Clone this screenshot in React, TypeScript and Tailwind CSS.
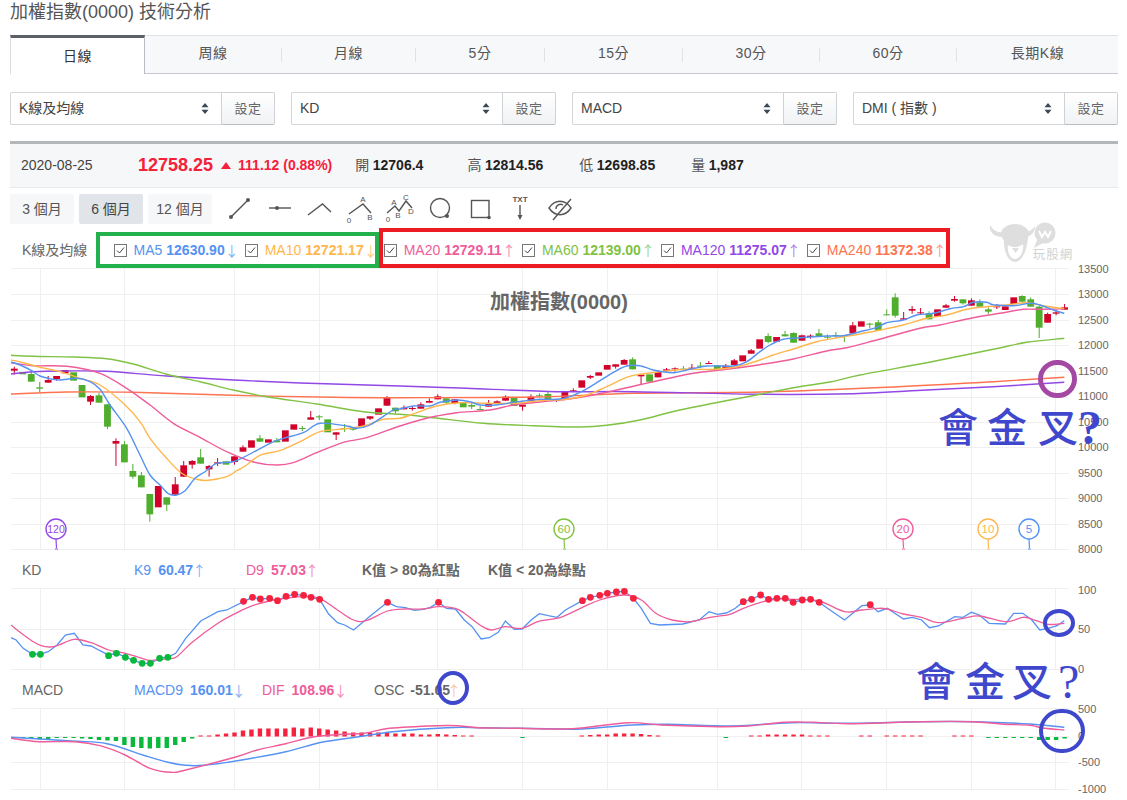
import React from 'react';

type Pt = number[];
type Candle = [string, number, number, number?, number?];

const GRID_X = [40, 124, 234, 319, 437, 522, 607, 717, 801, 886, 971, 1055];
const candleX = (i: number) => 14.3 + 8.47 * i;

// [colour, body top, body bottom, wick top, wick bottom] read from the chart
const candlesA: Candle[] = [
  ['r', 86, 92, 80, 104], ['g', 96, 103], ['g', 102, 125, 96, 125], ['g', 142, 146, 126, 158], ['r', 120, 128, 108, 128],
  ['r', 108, 117, 108, 122], ['r', 90, 100], ['g', 97, 122], ['g', 135, 172], ['r', 168, 185, 165, 195],
  ['g', 166, 188, 158, 188], ['g', 193, 260, 193, 267], ['r', 303, 311, 295, 378], ['g', 313, 367, 303, 367], ['g', 393, 410, 372, 416],
  ['g', 406, 442, 396, 442], ['g', 462, 523, 462, 545], ['r', 438, 502], ['g', 472, 494, 472, 513], ['r', 433, 464, 411, 464],
  ['r', 376, 410, 363, 410], ['r', 363, 374, 360, 386], ['g', 352, 371, 327, 371], ['r', 378, 388, 375, 410], ['r', 367, 371, 354, 378],
  ['g', 364, 374], ['r', 349, 366, 349, 374], ['r', 322, 335, 316, 335], ['r', 301, 323], ['g', 295, 305, 285, 305],
  ['r', 298, 308], ['g', 301, 307, 294, 307], ['r', 271, 305], ['r', 253, 269], ['g', 264, 267, 258, 273],
  ['r', 232, 239, 213, 239], ['g', 229, 232, 225, 240], ['g', 238, 277], ['r', 277, 284, 277, 300], ['g', 264, 267, 252, 276],
  ['g', 265, 269, 262, 272], ['r', 235, 260], ['r', 229, 236, 229, 240], ['r', 205, 224], ['r', 173, 197, 168, 197],
  ['g', 203, 214, 203, 221], ['r', 203, 208, 196, 208], ['r', 204, 206, 198, 212], ['r', 193, 206, 187, 206], ['r', 183, 188, 175, 188],
  ['r', 169, 178, 163, 178], ['g', 175, 188, 175, 192], ['r', 178, 189, 178, 193], ['g', 188, 202], ['g', 195, 200, 187, 207],
  ['g', 207, 209, 198, 209], ['r', 190, 200, 180, 200], ['r', 184, 190, 181, 190], ['r', 170, 182, 166, 182], ['g', 172, 198],
  ['r', 194, 200, 194, 212], ['r', 170, 185, 163, 185], ['g', 166, 169, 160, 173], ['g', 162, 178, 156, 180], ['r', 178, 182, 178, 186],
  ['r', 156, 176], ['r', 151, 156, 145, 156], ['r', 121, 143], ['r', 108, 113, 105, 117], ['r', 97, 107],
  ['r', 75, 89], ['r', 73, 80, 73, 86], ['r', 60, 74, 57, 74], ['g', 58, 88, 52, 88], ['r', 104, 109, 104, 132],
  ['g', 103, 125], ['r', 96, 112, 90, 112], ['r', 88, 92, 84, 95], ['r', 85, 88, 82, 95], ['g', 86, 88, 78, 92],
  ['r', 83, 86, 72, 90], ['g', 77, 80, 66, 85], ['r', 69, 71, 63, 72], ['g', 76, 88, 76, 92], ['r', 77, 85, 72, 85],
  ['r', 61, 75, 57, 75], ['r', 46, 64], ['r', 31, 41, 27, 41],
];
const candlesB: Candle[] = [
  ['r', 208, 236], ['g', 198, 216, 190, 220], ['r', 201, 215], ['g', 193, 199, 183, 199], ['g', 189, 218, 187, 218],
  ['r', 196, 212, 194, 212], ['r', 197, 201, 193, 206], ['g', 190, 198, 177, 198], ['g', 200, 203, 193, 210], ['g', 195, 198, 186, 203],
  ['g', 195, 198, 195, 216], ['r', 166, 190, 156, 190], ['r', 154, 170], ['g', 161, 164, 158, 175], ['g', 157, 181, 150, 181],
  ['g', 133, 136, 118, 136], ['g', 82, 137, 70, 143], ['r', 145, 149, 126, 149], ['r', 117, 122, 108, 131], ['r', 127, 130, 114, 135],
  ['g', 130, 148, 124, 148], ['r', 118, 140], ['r', 106, 113, 102, 113], ['r', 87, 92, 78, 95], ['g', 88, 100, 88, 104],
  ['r', 91, 107, 85, 107], ['g', 97, 110, 88, 110], ['g', 118, 125, 112, 132], ['r', 109, 112, 102, 117], ['r', 109, 120],
  ['r', 82, 102], ['g', 78, 95, 76, 100], ['g', 88, 110, 82, 110], ['g', 110, 173, 108, 204], ['r', 132, 158, 128, 158],
  ['r', 127, 131, 120, 136], ['r', 112, 119, 102, 119],
];

const map = (pts: Pt[], ox: number, sx: number, oy: number) => pts.map(([x, y]) => [ox + x / sx, oy + y / 3]);
const main = (a: Pt[], b: Pt[], c: Pt[]) => [...map(a, 0, 3, 340), ...map(b, 400, 3, 340), ...map(c, 760, 3, 270)];
const lower = (a: Pt[], b: Pt[]) => [...map(a, 0, 2.8, 555), ...map(b, 560, 2.766, 555)];

const smooth = (p: Pt[]) => {
  let d = `M${p[0][0].toFixed(1)} ${p[0][1].toFixed(1)}`;
  for (let i = 0; i < p.length - 1; i++) {
    const a = p[i - 1] || p[i];
    const b = p[i];
    const c = p[i + 1];
    const e = p[i + 2] || c;
    d += `C${(b[0] + (c[0] - a[0]) / 6).toFixed(1)} ${(b[1] + (c[1] - a[1]) / 6).toFixed(1)} ${(c[0] - (e[0] - b[0]) / 6).toFixed(1)} ${(c[1] - (e[1] - b[1]) / 6).toFixed(1)} ${c[0].toFixed(1)} ${c[1].toFixed(1)}`;
  }
  return d;
};
const poly = (p: Pt[]) => p.map(q => q[0].toFixed(1) + ',' + q[1].toFixed(1)).join(' ');

const BLUE = '#5592f2';
const ORANGE = '#ffb74d';
const PINK = '#ef5c9a';
const GREEN = '#80c244';
const PURPLE = '#9148e6';
const CORAL = '#ff7350';

const ma5 = main(
  [[33, 66], [60, 75], [95, 92], [120, 108], [150, 116], [180, 120], [230, 115], [270, 125], [300, 148], [330, 195], [380, 265], [420, 345], [450, 405], [480, 435], [505, 461], [530, 465], [555, 452], [585, 415], [615, 395], [650, 370], [700, 365], [750, 342], [810, 310], [850, 295], [910, 278], [960, 250], [1040, 258], [1070, 265], [1110, 255], [1180, 210]],
  [[0, 207], [40, 198], [90, 198], [120, 187], [170, 180], [210, 185], [240, 195], [290, 195], [340, 187], [370, 183], [420, 178], [470, 178], [510, 170], [550, 152], [600, 122], [640, 97], [680, 78], [720, 77], [760, 90], [820, 98], [870, 88], [920, 78], [1000, 78], [1040, 65]],
  [[0, 245], [30, 225], [70, 208], [120, 203], [200, 198], [250, 197], [300, 185], [350, 172], [380, 158], [430, 150], [470, 135], [520, 130], [570, 116], [610, 110], [640, 97], [680, 97], [700, 104], [760, 107], [810, 100], [840, 105], [880, 120], [913, 130]],
);
const ma10 = main(
  [[33, 60], [70, 68], [120, 82], [180, 95], [240, 115], [300, 135], [370, 190], [420, 245], [450, 295], [500, 355], [545, 400], [590, 418], [625, 421], [680, 410], [710, 392], [740, 375], [780, 346], [840, 332], [900, 305], [960, 275], [1030, 267], [1090, 258], [1150, 238]],
  [[0, 235], [50, 218], [110, 198], [180, 188], [260, 190], [340, 190], [420, 182], [500, 178], [560, 165], [620, 140], [680, 112], [720, 103], [780, 95], [860, 88], [950, 88], [1020, 78]],
  [[0, 270], [40, 255], [100, 237], [170, 215], [240, 202], [300, 192], [360, 180], [430, 165], [500, 145], [560, 135], [620, 118], [680, 110], [740, 105], [800, 98], [850, 107], [913, 116]],
);
const ma20 = main(
  [[33, 68], [100, 77], [200, 79], [300, 100], [380, 145], [450, 195], [520, 250], [600, 292], [680, 335], [760, 366], [830, 375], [880, 368], [950, 338], [1030, 307], [1100, 293]],
  [[0, 258], [60, 240], [110, 228], [170, 218], [270, 210], [340, 195], [420, 186], [500, 178], [580, 165], [660, 148], [760, 125], [880, 100], [980, 88]],
  [[0, 284], [100, 267], [200, 243], [260, 233], [350, 210], [480, 175], [540, 165], [640, 143], [720, 130], [790, 118], [850, 118], [913, 116]],
);
const ma60 = main(
  [[33, 46], [100, 49], [220, 51], [320, 56], [400, 72], [500, 103], [600, 125], [700, 150], [800, 170], [950, 192], [1090, 215]],
  [[0, 223], [100, 233], [250, 250], [400, 257], [540, 261], [620, 256], [720, 240], [850, 208]],
  [[0, 373], [100, 353], [210, 336], [300, 315], [500, 278], [700, 238], [800, 217], [913, 205]],
);
const ma120 = main(
  [[33, 102], [100, 95], [200, 93], [320, 94], [500, 108], [700, 120], [900, 129]],
  [[0, 138], [200, 145], [470, 155], [700, 155]],
  [[0, 373], [280, 371], [500, 360], [700, 350], [913, 337]],
);
const ma240 = main(
  [[33, 162], [200, 156], [400, 157], [700, 166], [1000, 172]],
  [[0, 173], [400, 171], [700, 160]],
  [[0, 366], [380, 352], [700, 335], [913, 322]],
);

const kLine = lower(
  [[31, 248], [45, 255], [65, 280], [90, 297], [113, 297], [135, 290], [160, 270], [183, 240], [208, 235], [232, 270], [255, 273], [280, 287], [304, 300], [326, 295], [351, 306], [374, 316], [398, 325], [421, 325], [447, 310], [470, 306], [492, 295], [520, 250], [562, 198], [610, 170], [635, 165], [682, 140], [707, 127], [729, 132], [755, 130], [777, 137], [801, 124], [825, 118], [850, 121], [871, 127], [895, 133], [920, 177], [945, 203], [965, 210], [990, 225], [1040, 180], [1085, 142], [1110, 155], [1135, 158], [1160, 166], [1185, 163], [1205, 157], [1228, 142], [1250, 160], [1275, 162], [1300, 195], [1322, 215], [1347, 252], [1370, 248], [1395, 232], [1415, 198], [1440, 223], [1462, 222], [1487, 195], [1510, 176], [1535, 182], [1560, 187]],
  [[15, 165], [62, 137], [84, 127], [110, 121], [131, 115], [156, 111], [178, 109], [203, 130], [225, 160], [250, 205], [275, 210], [340, 207], [385, 195], [412, 170], [435, 178], [460, 174], [485, 160], [507, 140], [530, 133], [555, 120], [577, 133], [600, 130], [623, 130], [645, 142], [670, 135], [693, 133], [717, 142], [740, 160], [787, 195], [835, 152], [858, 150], [880, 170], [905, 160], [950, 192], [975, 187], [1000, 195], [1022, 218], [1047, 213], [1092, 185], [1115, 187], [1138, 172], [1160, 180], [1187, 205], [1232, 207], [1255, 175], [1280, 175], [1305, 195], [1327, 225], [1350, 220], [1375, 212], [1395, 197]],
);
const dLine = lower(
  [[31, 210], [60, 235], [90, 258], [113, 271], [140, 276], [165, 270], [208, 253], [255, 263], [304, 285], [351, 295], [398, 310], [421, 316], [470, 311], [495, 305], [540, 260], [610, 205], [660, 175], [707, 152], [755, 138], [801, 130], [850, 125], [895, 130], [945, 165], [990, 195], [1025, 197], [1085, 168], [1135, 162], [1185, 162], [1228, 155], [1275, 160], [1300, 175], [1347, 212], [1375, 225], [1415, 215], [1462, 220], [1510, 198]],
  [[0, 188], [62, 157], [110, 135], [178, 120], [225, 135], [265, 175], [310, 195], [360, 200], [415, 187], [470, 178], [507, 160], [555, 142], [600, 132], [645, 133], [717, 138], [787, 170], [835, 165], [880, 160], [905, 162], [950, 177], [1000, 187], [1047, 203], [1115, 190], [1160, 183], [1232, 200], [1280, 187], [1305, 192], [1350, 208], [1395, 205]],
);
const redDots = lower(
  [[682, 139], [707, 127], [729, 132], [755, 130], [777, 137], [801, 124], [825, 118], [850, 121], [871, 127], [895, 133], [1085, 142], [1228, 142]],
  [[62, 137], [84, 127], [110, 121], [131, 115], [156, 111], [178, 109], [203, 130], [507, 140], [530, 133], [555, 120], [577, 133], [600, 130], [623, 130], [645, 142], [670, 135], [693, 133], [717, 142], [858, 149]],
);
const greenDots = lower(
  [[91, 298], [113, 298], [304, 302], [326, 295], [351, 307], [374, 316], [398, 325], [421, 325], [447, 310], [470, 307]],
  [],
);

const macdLine = lower(
  [[31, 547], [200, 558], [300, 566], [400, 600], [470, 622], [520, 631], [570, 631], [660, 618], [800, 590], [900, 562], [1000, 546], [1100, 530], [1250, 518], [1350, 518]],
  [[0, 522], [60, 522], [200, 510], [300, 508], [480, 513], [640, 503], [800, 505], [1000, 500], [1150, 500], [1300, 507], [1395, 517]],
);
const difLine = lower(
  [[31, 550], [110, 560], [210, 560], [280, 572], [350, 600], [420, 640], [480, 652], [520, 645], [660, 606], [720, 585], [800, 566], [880, 545], [960, 538], [1020, 535], [1090, 520], [1225, 512], [1280, 512], [1340, 518], [1450, 520]],
  [[0, 522], [60, 519], [190, 503], [280, 510], [440, 515], [520, 513], [620, 502], [700, 502], [800, 506], [1000, 500], [1140, 500], [1220, 507], [1300, 511], [1340, 520], [1395, 525]],
);

// [candle index, bar height]; below the zero line
const oscDown: number[][] = [
  [1, 1], [2, 1.5], [3, 2.5], [4, 2.5], [5, 1], [6, 1], [7, 1], [8, 1.5], [9, 2], [10, 3], [11, 3.5], [12, 4], [13, 8], [14, 10], [15, 11], [16, 11.5], [17, 11], [18, 11], [19, 8], [20, 5], [21, 1.5],
  [60, 1], [84, 1], [115, 1], [116, 1], [117, 1], [118, 1], [119, 1], [120, 1], [121, 3], [122, 3], [123, 3], [124, 1.5],
];
const oscUp: number[][] = [
  [22, 1], [23, 1], [24, 2], [25, 3], [26, 4], [27, 6], [28, 7], [29, 8], [30, 8], [31, 8], [32, 8], [33, 9], [34, 8], [35, 9], [36, 8], [37, 7], [38, 6], [39, 5], [40, 4], [41, 4], [42, 4], [43, 4], [44, 4], [45, 3], [46, 3], [47, 3], [48, 2], [49, 2], [50, 2.5], [51, 2], [52, 1.5], [53, 1], [54, 1],
  [67, 1], [68, 1.5], [69, 2], [70, 2], [71, 3], [72, 3], [73, 3], [74, 2.5], [75, 1.5], [76, 1],
  [87, 1], [88, 1], [89, 2], [90, 2], [91, 2], [92, 2], [93, 2], [94, 1], [95, 1], [96, 1],
  [100, 1], [101, 1], [103, 1], [104, 1], [105, 1], [106, 1], [107, 1], [111, 1], [112, 1], [113, 1],
];

const Grid = ({ ys, top, bottom }: { ys: number[]; top: number; bottom: number }) => (
  <g stroke="#efefef" strokeWidth="1">
    {GRID_X.map(x => <line key={x} x1={x + 0.5} x2={x + 0.5} y1={top} y2={bottom} />)}
    {ys.map(y => <line key={y} x1="11" x2="1069" y1={y + 0.5} y2={y + 0.5} />)}
  </g>
);

const AxisLabels = ({ rows }: { rows: [string, number][] }) => (
  <g fill="#666" fontSize="11">
    {rows.map(([t, y]) => <text key={t} x="1078" y={y + 4}>{t}</text>)}
  </g>
);

const CandleMark = ({ c, x, base }: { c: Candle; x: number; base: number }) => {
  const fill = c[0] === 'r' ? '#d0022b' : '#4fae2e';
  const top = base + c[1] / 3;
  const bottom = base + c[2] / 3;
  return (
    <g fill={fill}>
      {c[3] !== undefined && <rect x={x - 0.5} y={base + c[3] / 3} width="1" height={(c[4]! - c[3]) / 3} />}
      <rect x={x - 3.4} y={top} width="6.8" height={Math.max(bottom - top, 1)} />
    </g>
  );
};

const Pin = ({ x, label, color }: { x: number; label: string; color: string }) => (
  <g>
    <circle cx={x} cy="529" r="10" fill="#fff" stroke={color} strokeWidth="1.4" />
    <path d={`M${x} 539 L${x + 0.5} 548 M${x - 1} 549 h3`} stroke={color} strokeWidth="1.2" fill="none" />
    <text x={x} y="533" fill={color} fontSize={label.length > 2 ? 10.5 : 11.5} textAnchor="middle">{label}</text>
  </g>
);

const MainChart = () => (
  <svg viewBox="0 268 1127 287" className="block w-[1127px] h-[287px] overflow-visible">
    <Grid ys={[268, 294, 320, 345, 371, 397, 422, 447, 473, 498, 524, 549]} top={268} bottom={549} />
    <text x="559" y="309" textAnchor="middle" fill="#666" fontSize="20" fontWeight="bold">加權指數(0000)</text>
    {candlesA.map((c, i) => <CandleMark key={i} c={c} x={candleX(i)} base={340} />)}
    {candlesB.map((c, i) => <CandleMark key={i} c={c} x={candleX(i + 88)} base={270} />)}
    <g fill="none" strokeWidth="1.4" strokeLinejoin="round">
      <path d={smooth(ma240)} stroke={CORAL} />
      <path d={smooth(ma120)} stroke={PURPLE} />
      <path d={smooth(ma60)} stroke={GREEN} />
      <path d={smooth(ma20)} stroke={PINK} />
      <path d={smooth(ma10)} stroke={ORANGE} />
      <path d={smooth(ma5)} stroke={BLUE} />
    </g>
    <Pin x={56} label="120" color={PURPLE} />
    <Pin x={564} label="60" color={GREEN} />
    <Pin x={903} label="20" color={PINK} />
    <Pin x={988} label="10" color={ORANGE} />
    <Pin x={1029} label="5" color={BLUE} />
    <AxisLabels rows={[['13500', 269], ['13000', 294], ['12500', 320], ['12000', 345], ['11500', 371], ['11000', 396], ['10500', 422], ['10000', 447], ['9500', 473], ['9000', 498], ['8500', 524], ['8000', 549]]} />
  </svg>
);

const KdChart = () => (
  <svg viewBox="0 588 1127 84" className="block w-[1127px] h-[84px] overflow-visible">
    <Grid ys={[588, 629, 669]} top={588} bottom={669} />
    <polyline points={poly(kLine)} fill="none" stroke={BLUE} strokeWidth="1.3" />
    <path d={smooth(dLine)} fill="none" stroke={PINK} strokeWidth="1.3" />
    {redDots.map((p, i) => <circle key={i} cx={p[0]} cy={p[1]} r="3.4" fill="#f5223f" />)}
    {greenDots.map((p, i) => <circle key={i} cx={p[0]} cy={p[1]} r="3.4" fill="#08b93c" />)}
    <AxisLabels rows={[['100', 590], ['50', 629], ['0', 669]]} />
  </svg>
);

const MacdChart = () => (
  <svg viewBox="0 708 1127 92" className="block w-[1127px] h-[92px] overflow-visible">
    <Grid ys={[708, 736, 762, 789]} top={708} bottom={789} />
    {oscUp.map(([i, h]) => <rect key={i} x={candleX(i) - 2.2} y={736.5 - h} width="4.4" height={h} fill="#f5223f" />)}
    {oscDown.map(([i, h]) => <rect key={i} x={candleX(i) - 2.2} y={737} width="4.4" height={h} fill="#08b93c" />)}
    <path d={smooth(macdLine)} fill="none" stroke={BLUE} strokeWidth="1.4" />
    <path d={smooth(difLine)} fill="none" stroke={PINK} strokeWidth="1.4" />
    <AxisLabels rows={[['500', 709], ['0', 736], ['-500', 762], ['-1000', 789]]} />
  </svg>
);

const Sort = () => (
  <svg viewBox="0 0 10 14" className="w-[8px] h-[11px] shrink-0">
    <path d="M5 0 L9.5 5.5 H0.5Z M5 14 L9.5 8.5 H0.5Z" fill="#3c4856" />
  </svg>
);

const Picker = ({ label }: { label: string }) => (
  <div className="flex h-[33px]">
    <div className="flex flex-1 items-center justify-between border border-[#d3d6db] border-r-0 rounded-l-[2px] bg-white pl-2 pr-[12px] text-[14px] text-[#444]">
      <span>{label}</span>
      <Sort />
    </div>
    <button className="w-[54px] border border-[#cfd2d6] border-b-[#b9bcc1] rounded-r-[2px] bg-gradient-to-b from-white to-[#f0f2f4] text-[13px] tracking-[0.5px] text-[#666]">設定</button>
  </div>
);

const tabs = [
  ['周線', 136], ['月線', 133], ['5分', 128], ['15分', 137], ['30分', 136], ['60分', 136], ['長期K線', 161],
] as [string, number][];

const Tabs = () => (
  <div className="flex h-[39px] w-[1108px] ml-[10px] bg-[#f7f8fa] border-t border-t-[#e1e3e7] border-b border-b-[#c6c9ce]">
    <div className="flex w-[135px] h-[39px] -mt-px items-center justify-center bg-white border-t-[3px] border-t-[#5c6066] border-l border-l-[#d8dade] border-r border-r-[#b9bcc2] text-[14px] tracking-[0.5px] text-[#333]">日線</div>
    {tabs.map(([t, w], i) => (
      <React.Fragment key={t}>
        <div style={{ width: w }} className="flex items-center justify-center pb-[2px] text-[14px] tracking-[0.5px] text-[#555]">{t}</div>
        {i < tabs.length - 1 && <span className="w-px h-[14px] mt-[12px] bg-[#e0e2e6]" />}
      </React.Fragment>
    ))}
  </div>
);

const Stat = ({ k, v, className }: { k: string; v: string; className: string }) => (
  <span className={`flex items-center gap-[3.5px] ${className}`}>
    <span className="text-[14px] text-[#555]">{k}</span>
    <b className="text-[14px] text-[#222]">{v}</b>
  </span>
);

const InfoBar = () => (
  <div className="flex items-center h-[47px] w-[1108px] ml-[10px] bg-[#f6f7f9] border-t-[3px] border-t-[#b3b7bb] border-b border-b-[#e8eaed] pl-[11px] pb-px">
    <span className="w-[117px] text-[14px] text-[#444]">2020-08-25</span>
    <b className="text-[18px] text-[#f5203a]">12758.25</b>
    <span className="ml-2 mr-[7px] w-0 h-0 border-x-[5px] border-x-transparent border-b-[7px] border-b-[#f5203a]" />
    <b className="text-[14px] text-[#f5203a]">111.12 (0.88%)</b>
    <Stat k="開" v="12706.4" className="ml-[23px]" />
    <Stat k="高" v="12814.56" className="ml-[44px]" />
    <Stat k="低" v="12698.85" className="ml-[36px]" />
    <Stat k="量" v="1,987" className="ml-[36px]" />
  </div>
);

const DrawTools = () => (
  <svg viewBox="225 194 350 30" className="w-[350px] h-[30px] ml-[13px] overflow-visible">
    <g fill="none" stroke="#555" strokeWidth="1.4">
      <path d="M231 217 L248 200" />
      <path d="M269 208 H291" />
      <path d="M308 215 L322.5 204 L331 212" />
      <path d="M349 214 L363 204 L371 213" />
      <path d="M387 213 L395 206 L399 211 L406 201 L412 208" />
      <circle cx="440" cy="208" r="9.5" />
      <rect x="471.5" y="200.5" width="17.5" height="17" />
      <path d="M520 205 V217" />
      <path d="M549 208 C555 199 565 199 571 208 C565 217 555 217 549 208Z M556 209 a4.5 4.5 0 0 1 7-4 M553 220 L571 199" />
    </g>
    <g fill="#555">
      <circle cx="231" cy="217" r="2" />
      <circle cx="248" cy="200" r="2" />
      <circle cx="277" cy="208" r="2" />
      <circle cx="447" cy="216" r="2" />
      <circle cx="489" cy="217.5" r="1.8" />
      <path d="M517.5 215 H522.5 L520 220Z" />
    </g>
    <g fill="#555" fontSize="8" textAnchor="middle">
      <text x="363" y="202">A</text>
      <text x="349" y="223">0</text>
      <text x="370" y="220">B</text>
      <text x="394" y="205">A</text>
      <text x="406" y="200">C</text>
      <text x="388" y="222">0</text>
      <text x="398" y="218">B</text>
      <text x="411" y="214">D</text>
      <text x="520" y="202" fontWeight="bold">TXT</text>
    </g>
  </svg>
);

const RangeRow = () => (
  <div className="flex items-center h-[30px] mt-[6px] ml-[10px]">
    <span className="flex items-center justify-center w-[64px] h-[30px] rounded-[2px] bg-[#f6f7f9] text-[14px] text-[#555]">3 個月</span>
    <span className="flex items-center justify-center w-[64px] h-[30px] ml-[5px] rounded-[2px] bg-[#e1e5e9] text-[14px] text-[#444]">6 個月</span>
    <span className="flex items-center justify-center w-[64px] h-[30px] ml-[5px] rounded-[2px] bg-[#f6f7f9] text-[14px] text-[#555]">12 個月</span>
    <DrawTools />
  </div>
);

const Check = () => (
  <span className="flex items-center justify-center w-[13px] h-[13px] shrink-0 border border-[#777] bg-white">
    <svg viewBox="0 0 11 11" className="w-[11px] h-[11px]">
      <path d="M2 5.5 L4.5 8 L9 2.5" fill="none" stroke="#444" strokeWidth="1" />
    </svg>
  </span>
);

const Arrow = ({ dir, className }: { dir: string; className: string }) => (
  <span className={`flex w-[8px] justify-center font-['Noto_Sans_CJK_TC',sans-serif] ${className}`}>{dir}</span>
);

const Legend = ({ name, value, dir, color }: { name: string; value: string; dir: string; color: string }) => (
  <span style={{ color }} className="flex items-center text-[14px]">
    <Check />
    <span className="ml-[6.5px]">{name}</span>
    <b className="ml-[4px]">{value}</b>
    <Arrow dir={dir} className="ml-[3px] opacity-70" />
  </span>
);

const MaRow = () => (
  <div className="flex items-center h-[44px] pt-[8px] pl-[22px]">
    <span className="w-[92px] text-[14px] text-[#666]">K線及均線</span>
    <span className="flex items-center gap-[9.5px]">
      <Legend name="MA5" value="12630.90" dir="↓" color={BLUE} />
      <Legend name="MA10" value="12721.17" dir="↓" color={ORANGE} />
      <Legend name="MA20" value="12729.11" dir="↑" color={PINK} />
      <Legend name="MA60" value="12139.00" dir="↑" color={GREEN} />
      <Legend name="MA120" value="11275.07" dir="↑" color={PURPLE} />
      <Legend name="MA240" value="11372.38" dir="↑" color={CORAL} />
    </span>
  </div>
);

const Reading = ({ name, value, dir, color, className }: { name: string; value: string; dir: string; color: string; className: string }) => (
  <span style={{ color }} className={`flex items-center ${className}`}>
    <span>{name}</span>
    <b className="ml-[7px]">{value}</b>
    <Arrow dir={dir} className="ml-[2px] opacity-70" />
  </span>
);

const KdHeader = () => (
  <div className="flex items-center h-[33px] pb-[3px] pl-[22px] text-[14px] text-[#666]">
    <span className="w-[112px]">KD</span>
    <Reading name="K9" value="60.47" dir="↑" color={BLUE} className="w-[112px]" />
    <Reading name="D9" value="57.03" dir="↑" color={PINK} className="w-[116px]" />
    <b className="w-[126px]">K值 &gt; 80為紅點</b>
    <b>K值 &lt; 20為綠點</b>
  </div>
);

const MacdHeader = () => (
  <div className="flex items-center h-[36px] pl-[22px] text-[14px] text-[#666]">
    <span className="w-[112px]">MACD</span>
    <Reading name="MACD9" value="160.01" dir="↓" color={BLUE} className="w-[128px]" />
    <Reading name="DIF" value="108.96" dir="↓" color={PINK} className="w-[112px]" />
    <span>OSC</span>
    <b className="ml-[6px]">-51.05</b>
    <Arrow dir="↑" className="text-[#f8c99a]" />
  </div>
);

const Watermark = () => (
  <svg viewBox="0 0 100 50" className="absolute left-[985px] top-[218px] w-[100px] h-[50px]">
    <g fill="#dedede">
      <circle cx="60" cy="15" r="10.5" />
      <path d="M52 22 L49 30 L58 25Z" />
      <path d="M5 7 C4 14 9 19 17 19 L18 14 C12 15 8 12 5 7Z" />
      <path d="M50 8 C50 14 46 18 41 19 L40 14 C44 14 47 12 50 8Z" />
      <ellipse cx="30" cy="16" rx="14" ry="10" />
      <path d="M19 18 C18 32 22 43 30 44 C37 44 42 32 43 20Z" />
    </g>
    <path d="M23 27 C22 34 25 41 30 41 C35 41 39 34 38 26 C33 30 28 30 23 27Z" fill="#fff" />
    <path d="M27 30 H34 L30.5 35Z" fill="#dedede" />
    <path d="M54 13 L57 19 L60 14 L63 19 L66 13" fill="none" stroke="#fff" strokeWidth="2" />
    <text x="68" y="41" fill="#d2d2d2" fontSize="12.5" letterSpacing="1" textAnchor="middle">玩股網</text>
  </svg>
);

// marker notes scribbled over the screenshot
const Notes = () => (
  <>
    <span className="absolute left-[96px] top-[232px] w-[283px] h-[36px] border-[4px] border-[#22b14c]" />
    <span className="absolute left-[379px] top-[228px] w-[571px] h-[40px] border-[4px] border-[#ed1c24]" />
    <span className="absolute left-[1038px] top-[360px] w-[39px] h-[38px] rounded-full border-[5px] border-[#a349a4]" />
    <span className="absolute left-[1043px] top-[609px] w-[32px] h-[28px] rounded-[50%] border-[4px] border-[#3f48cc]" />
    <span className="absolute left-[1039px] top-[709px] w-[46px] h-[44px] rounded-full border-[4px] border-[#3f48cc]" />
    <span className="absolute left-[437px] top-[671px] w-[32px] h-[34px] rounded-[50%] border-[4px] border-[#3f48cc]" />
    <span className="absolute left-[938px] top-[404px] flex text-[#3f48cc] text-[40px] leading-[48px] font-medium">
      <span className="w-[49px]">會</span><span className="w-[51px]">金</span><span className="w-[40px]">叉</span><span className="font-['Liberation_Serif',serif] text-[48px] font-bold">?</span>
    </span>
    <span className="absolute left-[916px] top-[658px] flex text-[#3f48cc] text-[40px] leading-[48px] font-medium">
      <span className="w-[49px]">會</span><span className="w-[47px]">金</span><span className="w-[46px]">叉</span><span className="font-['Liberation_Serif',serif] text-[48px]">?</span>
    </span>
  </>
);

const App = () => (
  <div className="relative w-[1127px] h-[800px] overflow-hidden bg-white font-['Liberation_Sans','Noto_Sans_CJK_TC',sans-serif]">
    <div className="h-[35px] pl-[10px] text-[18px] leading-[24px] text-[#555]">加權指數(0000) 技術分析</div>
    <Tabs />
    <div className="grid grid-cols-4 gap-[16px] w-[1108px] ml-[10px] mt-[18px]">
      <Picker label="K線及均線" />
      <Picker label="KD" />
      <Picker label="MACD" />
      <Picker label="DMI ( 指數 )" />
    </div>
    <div className="mt-[16px]">
      <InfoBar />
    </div>
    <RangeRow />
    <MaRow />
    <MainChart />
    <KdHeader />
    <KdChart />
    <MacdHeader />
    <MacdChart />
    <Watermark />
    <Notes />
  </div>
);

export default App;
